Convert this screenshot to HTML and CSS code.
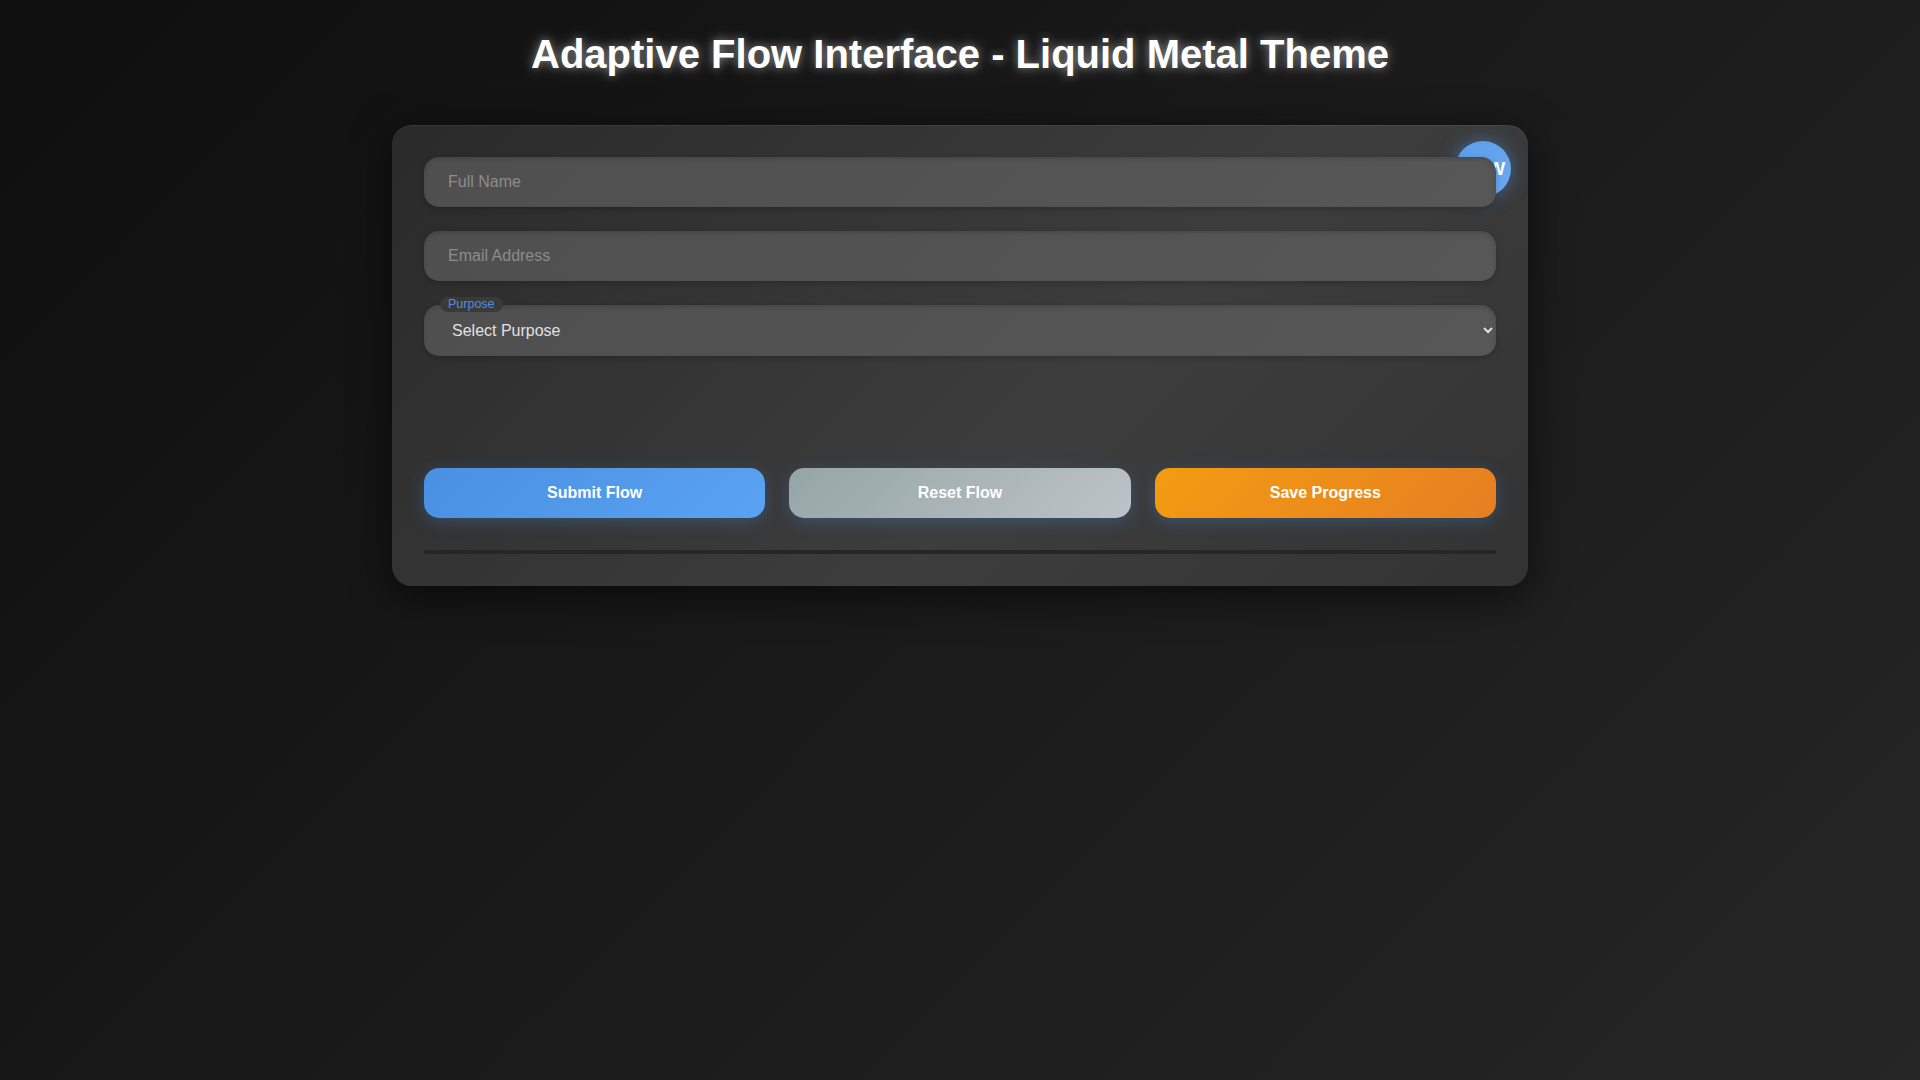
FILE: index.html
```html
<!DOCTYPE html>
<html lang="en">
<head>
<meta charset="UTF-8">
<title>Adaptive Flow Interface - Liquid Metal Theme</title>
<link rel="stylesheet" href="styles.css">
</head>
<body>
  <h1 class="page-title">Adaptive Flow Interface - Liquid Metal Theme</h1>
  <main class="flow-card">
    <div class="flow-badge">NEW</div>
    <form class="flow-form">
      <div class="field">
        <input class="field-input" type="text" placeholder="Full Name">
      </div>
      <div class="field">
        <input class="field-input" type="email" placeholder="Email Address">
      </div>
      <div class="field">
        <span class="field-label">Purpose</span>
        <select class="field-select">
          <option>Select Purpose</option>
          <option>Business</option>
          <option>Personal</option>
        </select>
      </div>
      <div class="dynamic-fields"></div>
      <div class="actions">
        <button type="button" class="btn btn-submit">Submit Flow</button>
        <button type="button" class="btn btn-reset">Reset Flow</button>
        <button type="button" class="btn btn-save">Save Progress</button>
      </div>
      <div class="progress-track"><div class="progress-fill"></div></div>
    </form>
  </main>
</body>
</html>
```
FILE: styles.css
```css
* { box-sizing: border-box; }
html, body { height: 100%; }
body {
  margin: 0;
  padding: 31px 0 0;
  min-height: 1080px;
  background: linear-gradient(135deg, #0f0f0f 0%, #1a1a1a 50%, #262626 100%);
  font-family: "Liberation Sans", Arial, sans-serif;
  color: #e0e0e0;
}
.page-title {
  margin: 0 0 48px;
  text-align: center;
  font-size: 40px;
  line-height: 46px;
  font-weight: 700;
  color: #ffffff;
  text-shadow: 0 0 10px rgba(255,255,255,0.45), 0 0 22px rgba(255,255,255,0.18);
}
.flow-card {
  position: relative;
  width: 1136px;
  margin: 0 auto;
  padding: 32px;
  border-radius: 20px;
  background: linear-gradient(135deg, #2a2a2a 0%, #353535 35%, #3d3d3d 60%, #333333 100%);
  box-shadow: 0 10px 40px rgba(0,0,0,0.6), inset 0 1px 0 rgba(255,255,255,0.06);
}
.flow-badge {
  position: absolute;
  top: 16px;
  right: 17px;
  width: 56px;
  height: 56px;
  border-radius: 50%;
  background: linear-gradient(135deg, #5b9eea, #6aaaf0);
  box-shadow: 0 0 18px rgba(74,144,226,0.55);
  display: flex;
  align-items: center;
  justify-content: center;
  color: #fff;
  font-weight: 700;
  font-size: 19px;
  z-index: 0;
}
.flow-form {
  position: relative;
  z-index: 1;
  display: flex;
  flex-direction: column;
  gap: 24px;
}
.field { position: relative; }
.field-input, .field-select {
  display: block;
  width: 100%;
  height: 50px;
  padding: 0 24px;
  border: none;
  border-radius: 15px;
  background: linear-gradient(135deg, #4f4f4f 0%, #575757 100%);
  box-shadow: inset 0 2px 4px rgba(0,0,0,0.15), 0 2px 6px rgba(0,0,0,0.2);
  color: #e0e0e0;
  font-family: "Liberation Sans", Arial, sans-serif;
  font-size: 16px;
  outline: none;
}
.field-input::placeholder { color: #8c8c8c; }
.field-select { height: 51px; }
.field-select option { background: #444; color: #e0e0e0; }
.field-label {
  position: absolute;
  top: -8px;
  left: 16px;
  z-index: 2;
  height: 15px;
  line-height: 15px;
  padding: 0 8px;
  border-radius: 8px;
  background: #3a3a3a;
  color: #4a90e2;
  font-size: 12.5px;
}
.dynamic-fields { height: 64px; }
.actions {
  display: grid;
  grid-template-columns: repeat(3, 1fr);
  gap: 24px;
}
.btn {
  height: 50px;
  border: none;
  border-radius: 15px;
  color: #ffffff;
  font-family: "Liberation Sans", Arial, sans-serif;
  font-size: 16px;
  font-weight: 700;
  cursor: pointer;
  box-shadow: 0 4px 16px rgba(74,144,226,0.28);
}
.btn-submit { background: linear-gradient(135deg, #4a90e2, #5aa2f2); }
.btn-reset { background: linear-gradient(135deg, #95a5a6, #bdc3c7); }
.btn-save { background: linear-gradient(135deg, #f39c12, #e67e22); }
.progress-track {
  margin-top: 8px;
  height: 4px;
  border-radius: 2px;
  background: #262626;
  overflow: hidden;
}
.progress-fill { width: 0; height: 100%; background: #4a90e2; }
```
